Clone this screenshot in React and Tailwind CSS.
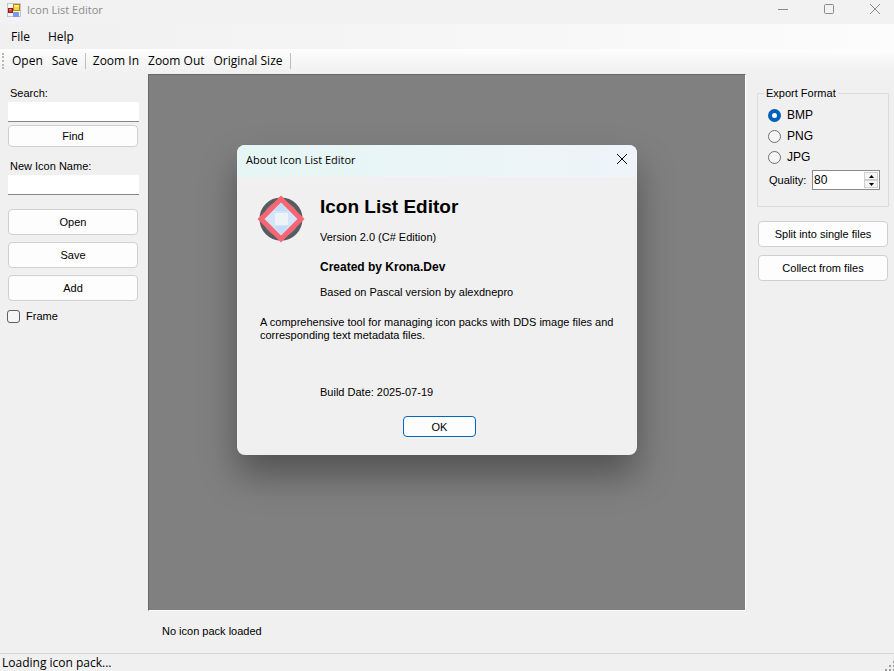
import React, { useState } from "react";

const formats = ["BMP", "PNG", "JPG"];

const AppIcon = () => (
  <svg width="14" height="14" viewBox="0 0 14 14" aria-hidden="true">
    <rect x="0.5" y="0.5" width="13" height="13" fill="#f4f4f6" stroke="#c3c3cb" />
    <rect x="6.5" y="1.5" width="6" height="6" fill="#fcd535" stroke="#b8860b" />
    <rect x="7" y="2" width="5" height="2" fill="#ffe98a" />
    <rect x="1.5" y="5.5" width="4" height="4" fill="#d63c34" stroke="#8f1d1d" />
    <rect x="2" y="6" width="2" height="1" fill="#f08a80" />
    <rect x="6.5" y="9.5" width="5" height="4" fill="#6f9df0" stroke="#7d9be0" />
  </svg>
);

const PackLogo = () => (
  <svg width="48" height="48" viewBox="0 0 48 48" aria-hidden="true">
    <circle cx="24" cy="24" r="19.5" fill="#85858b" stroke="#5b5a62" strokeWidth="4" />
    <path d="M24 4 44 24 24 44 4 24Z" fill="#d3e5fb" stroke="#f76673" strokeWidth="5" />
    <path d="M24 8 31 16H17zM24 40 31 31H17z" fill="#c3dcfb" />
    <path d="M18 18h13v12H18z" fill="#eef4f5" />
  </svg>
);

const CloseGlyph = () => (
  <svg width="12" height="12" viewBox="0 0 12 12" fill="none" stroke="currentColor" aria-hidden="true">
    <path d="M1 1l10 10M11 1L1 11" />
  </svg>
);

const TitleBar = () => (
  <header className="flex h-6 items-start justify-between bg-[#f2f2f2] pr-[13px] pl-[7px] text-[#8c8c8c]">
    <div className="flex h-5 items-center gap-1.5">
      <AppIcon />
      <h1 className="font-['Open_Sans',sans-serif] text-[11px]">Icon List Editor</h1>
    </div>
    <div className="flex h-[18px] items-center gap-[34px]">
      <button aria-label="Minimize">
        <svg width="12" height="12" viewBox="0 0 12 12" stroke="currentColor" aria-hidden="true">
          <path d="M1 6.5h10" />
        </svg>
      </button>
      <button aria-label="Maximize">
        <svg width="12" height="12" viewBox="0 0 12 12" fill="none" stroke="currentColor" aria-hidden="true">
          <rect x="1.5" y="1.5" width="9" height="9" rx="1" />
        </svg>
      </button>
      <button aria-label="Close">
        <CloseGlyph />
      </button>
    </div>
  </header>
);

const MenuBar = () => (
  <nav className="flex h-[25px] items-center gap-[18px] bg-linear-to-r from-[#f0f0f0] to-[#fcfcfc] px-[11px] font-['Open_Sans',sans-serif] text-[12px]">
    <button>File</button>
    <button>Help</button>
  </nav>
);

const Divider = () => <span className="h-4 w-px bg-[#bdbdbd]" />;

const ToolBar = () => (
  <div className="flex h-[25px] items-center bg-linear-to-b from-[#fdfdfd] to-[#f0f0f0] pb-px pl-0.5 font-['Open_Sans',sans-serif] text-[12px]">
    <span className="mr-2 h-4 border-l-2 border-dotted border-[#b8b8b8]" />
    <div className="flex items-center gap-[7px]">
      <div className="flex gap-[9px]">
        <button>Open</button>
        <button>Save</button>
      </div>
      <Divider />
      <div className="flex gap-[9px]">
        <button>Zoom In</button>
        <button>Zoom Out</button>
        <button>Original Size</button>
      </div>
      <Divider />
    </div>
  </div>
);

const PushButton = ({ children, className = "h-[26px]" }) => (
  <button className={`rounded border border-[#d0d0d0] bg-[#fdfdfd] text-center ${className}`}>{children}</button>
);

const inputClass = "h-5 w-full border-b border-[#868686] bg-white px-1 outline-none";

const LeftPanel = () => {
  const [frame, setFrame] = useState(false);

  return (
    <aside className="w-[148px] pt-3 pr-[9px] pl-2">
      <label htmlFor="search" className="mb-0.5 ml-0.5 block">Search:</label>
      <input id="search" type="text" className={inputClass} />
      <div className="mt-[3px] flex flex-col pr-px">
        <PushButton className="h-[22px]">Find</PushButton>
      </div>
      <label htmlFor="iconName" className="mt-3 mb-0.5 ml-0.5 block">New Icon Name:</label>
      <input id="iconName" type="text" className={inputClass} />
      <div className="mt-[14px] flex flex-col gap-[7px] pr-px">
        <PushButton>Open</PushButton>
        <PushButton>Save</PushButton>
        <PushButton>Add</PushButton>
      </div>
      <label className="mt-2 -ml-px flex items-center gap-1.5">
        <input
          type="checkbox"
          checked={frame}
          onChange={(e) => setFrame(e.target.checked)}
          className="size-[13px] appearance-none rounded-[3px] border border-[#5f5f5f] bg-[#f5f5f5] checked:bg-[#0067c0]"
        />
        Frame
      </label>
    </aside>
  );
};

const QualityField = () => {
  const [quality, setQuality] = useState(80);

  return (
    <div className="flex items-center justify-between pl-[3px]">
      <label htmlFor="quality">Quality:</label>
      <div className="flex h-5 w-[68px] border border-[#8a8a8a] bg-white p-px">
        <input
          id="quality"
          type="text"
          value={quality}
          onChange={(e) => setQuality(Number(e.target.value) || 0)}
          className="w-full min-w-0 text-[12px] outline-none"
        />
        <div className="flex w-[14px] shrink-0 flex-col">
          <button
            aria-label="Increase quality"
            onClick={() => setQuality(quality + 1)}
            className="flex flex-1 items-center justify-center border border-[#cfcfcf] bg-[#f4f4f4]"
          >
            <svg width="5" height="3" viewBox="0 0 5 3" aria-hidden="true"><path d="M2.5 0 5 3H0z" /></svg>
          </button>
          <button
            aria-label="Decrease quality"
            onClick={() => setQuality(quality - 1)}
            className="flex flex-1 items-center justify-center border border-[#cfcfcf] bg-[#f4f4f4]"
          >
            <svg width="5" height="3" viewBox="0 0 5 3" aria-hidden="true"><path d="M2.5 3 5 0H0z" /></svg>
          </button>
        </div>
      </div>
    </div>
  );
};

const RightPanel = () => {
  const [format, setFormat] = useState("BMP");

  return (
    <aside className="w-[148px] pt-3 pr-[5px] pl-[11px]">
      <fieldset className="border border-[#dcdcdc] px-2 pb-4">
        <legend className="-ml-0.5 px-0.5">Export Format</legend>
        <div className="flex flex-col gap-[7px] pt-2 pb-[6px] pl-0.5">
          {formats.map((name) => (
            <label key={name} className="flex h-[14px] items-center gap-1.5 text-[12px]">
              <input
                type="radio"
                name="format"
                checked={format === name}
                onChange={() => setFormat(name)}
                className="size-[13px] appearance-none rounded-full border border-[#707070] bg-[#f5f5f5] checked:border-4 checked:border-[#005fb8] checked:bg-white"
              />
              {name}
            </label>
          ))}
        </div>
        <QualityField />
      </fieldset>
      <div className="mt-[14px] flex flex-col gap-2 px-px">
        <PushButton>Split into single files</PushButton>
        <PushButton>Collect from files</PushButton>
      </div>
    </aside>
  );
};

const AboutDialog = ({ onClose }) => (
  <section
    role="dialog"
    aria-labelledby="aboutTitle"
    className="absolute top-[70px] left-[88px] w-[400px] overflow-hidden rounded-lg bg-[#f0f0f0] shadow-[0_20px_36px_0_rgba(0,0,0,0.36)]"
  >
    <div className="flex h-8 items-center justify-between bg-linear-to-r from-[#e6f6f5] to-[#eef4f9] px-[9px] pb-0.5">
      <h2 id="aboutTitle" className="font-['Open_Sans',sans-serif] text-[11px]">About Icon List Editor</h2>
      <button aria-label="Close dialog" onClick={onClose} className="pb-0.5">
        <CloseGlyph />
      </button>
    </div>
    <div className="px-5 pb-[18px]">
      <div className="flex gap-[15px] pt-[18px]">
        <PackLogo />
        <div className="flex flex-col">
          <h3 className="text-[19px] leading-6 font-bold">Icon List Editor</h3>
          <p className="mt-[11px]">Version 2.0 (C# Edition)</p>
          <p className="mt-4 text-[12px] font-bold">Created by Krona.Dev</p>
          <p className="mt-[11px]">Based on Pascal version by alexdnepro</p>
        </div>
      </div>
      <p className="mt-[17px] pl-[3px] leading-[13px]">
        A comprehensive tool for managing icon packs with DDS image files and corresponding text metadata files.
      </p>
      <p className="mt-[43px] pl-[63px]">Build Date: 2025-07-19</p>
      <div className="mt-[17px] flex justify-center pl-[5px]">
        <button onClick={onClose} className="h-[21px] w-[73px] rounded border border-[#0067c0] bg-[#fdfdfd]">
          OK
        </button>
      </div>
    </div>
  </section>
);

const StatusBar = () => (
  <footer className="flex h-[18px] items-end justify-between border-t border-[#d7d7d7] pl-0.5 font-['Open_Sans',sans-serif] text-[12px]">
    <span className="leading-4">Loading icon pack...</span>
    <svg width="9" height="10" viewBox="0 0 9 10" fill="#a0a0a0" aria-hidden="true">
      <path d="M8 0h1v2H8zM4 4h2v2H4zM8 4h1v2H8zM0 8h2v2H0zM4 8h2v2H4zM8 8h1v2H8z" />
    </svg>
  </footer>
);

const App = () => {
  const [aboutOpen, setAboutOpen] = useState(true);

  return (
    <div className="flex min-h-screen flex-col bg-[#f0f0f0] font-['Liberation_Sans',Arial,sans-serif] text-[11px] leading-[14px] text-black">
      <TitleBar />
      <MenuBar />
      <ToolBar />
      <div className="flex flex-1">
        <LeftPanel />
        <main className="flex min-w-0 flex-1 flex-col">
          <div className="relative flex-1 border border-t-[#696969] border-r-white border-b-white border-l-[#696969] bg-[#808080]">
            {aboutOpen && <AboutDialog onClose={() => setAboutOpen(false)} />}
          </div>
          <p className="pt-[13px] pb-[15px] pl-[14px]">No icon pack loaded</p>
        </main>
        <RightPanel />
      </div>
      <StatusBar />
    </div>
  );
};

export default App;
